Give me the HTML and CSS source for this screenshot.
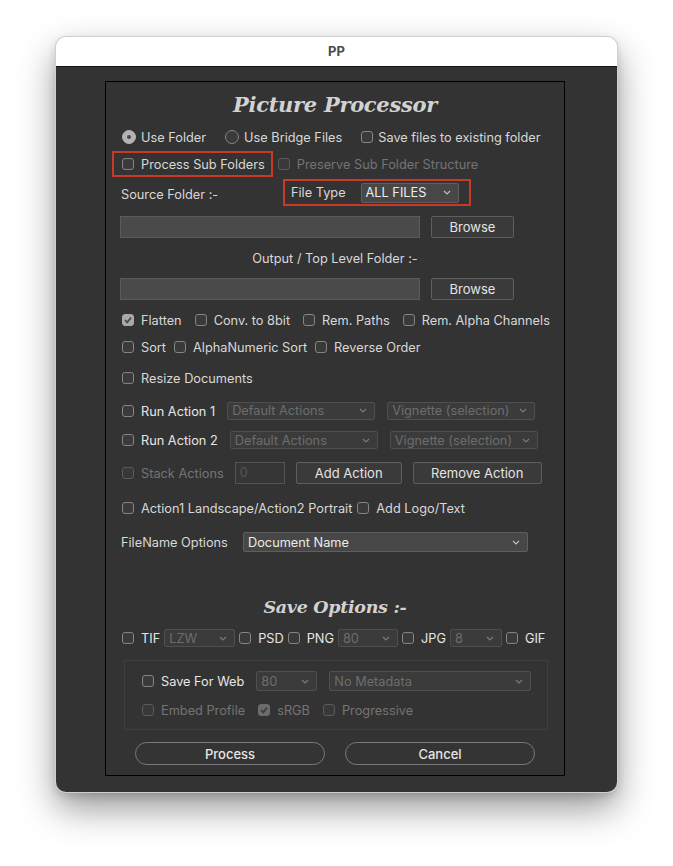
FILE: index.html
```html
<!DOCTYPE html>
<html lang="en">
<head>
    <meta charset="UTF-8">
    <title>PP</title>
    <link rel="stylesheet" href="styles.css">
</head>
<body>
<div class="window">
    <div class="titlebar">PP</div>
    <div class="dialog">
        <div class="panel">
            <h1 class="heading">Picture Processor</h1>

            <div class="row r-source cb-row gap19">
                <label class="opt"><span class="radio on"></span>Use Folder</label>
                <label class="opt"><span class="radio"></span>Use Bridge Files</label>
                <label class="opt"><span class="cb"></span>Save files to existing folder</label>
            </div>

            <div class="row r-sub cb-row">
                <label class="opt hilite hl-sub"><span class="cb"></span>Process Sub Folders</label>
                <label class="opt off"><span class="cb"></span>Preserve Sub Folder Structure</label>
            </div>

            <div class="row r-type">
                <span class="lbl src-lbl">Source Folder :-</span>
                <div class="hilite hl-type">
                    <span class="lbl">File Type</span>
                    <div class="select on w-type">ALL FILES<svg width="8" height="5" viewBox="0 0 8 5"><polyline points="1,1 4,4 7,1" fill="none" stroke="#bdbdbd" stroke-width="1.2"/></svg></div>
                </div>
            </div>

            <div class="row r-field">
                <div class="field"></div>
                <button class="btn browse">Browse</button>
            </div>

            <div class="row r-out">
                <span class="lbl">Output / Top Level Folder :-</span>
            </div>

            <div class="row r-field">
                <div class="field"></div>
                <button class="btn browse">Browse</button>
            </div>

            <div class="row r-flat cb-row gap13">
                <label class="opt"><span class="cb on"><svg width="10" height="10" viewBox="0 0 10 10"><polyline points="2,5.2 4.2,7.4 8,2.6" fill="none" stroke="#4a4a4a" stroke-width="1.8"/></svg></span>Flatten</label>
                <label class="opt"><span class="cb"></span>Conv. to 8bit</label>
                <label class="opt"><span class="cb"></span>Rem. Paths</label>
                <label class="opt"><span class="cb"></span>Rem. Alpha Channels</label>
            </div>

            <div class="row r-sort cb-row gap8">
                <label class="opt"><span class="cb"></span>Sort</label>
                <label class="opt"><span class="cb"></span>AlphaNumeric Sort</label>
                <label class="opt"><span class="cb"></span>Reverse Order</label>
            </div>

            <div class="row r-resize cb-row">
                <label class="opt"><span class="cb"></span>Resize Documents</label>
            </div>

            <div class="row r-act1 cb-row gap12">
                <label class="opt bright"><span class="cb"></span>Run Action 1</label>
                <div class="select w-act">Default Actions<svg width="8" height="5" viewBox="0 0 8 5"><polyline points="1,1 4,4 7,1" fill="none" stroke="#7a7a7a" stroke-width="1.2"/></svg></div>
                <div class="select w-act">Vignette (selection)<svg width="8" height="5" viewBox="0 0 8 5"><polyline points="1,1 4,4 7,1" fill="none" stroke="#7a7a7a" stroke-width="1.2"/></svg></div>
            </div>

            <div class="row r-act2 cb-row gap12">
                <label class="opt bright"><span class="cb"></span>Run Action 2</label>
                <div class="select w-act">Default Actions<svg width="8" height="5" viewBox="0 0 8 5"><polyline points="1,1 4,4 7,1" fill="none" stroke="#7a7a7a" stroke-width="1.2"/></svg></div>
                <div class="select w-act">Vignette (selection)<svg width="8" height="5" viewBox="0 0 8 5"><polyline points="1,1 4,4 7,1" fill="none" stroke="#7a7a7a" stroke-width="1.2"/></svg></div>
            </div>

            <div class="row r-stack cb-row gap11">
                <label class="opt off"><span class="cb"></span>Stack Actions</label>
                <div class="num">0</div>
                <button class="btn add">Add Action</button>
                <button class="btn remove">Remove Action</button>
            </div>

            <div class="row r-land cb-row gap5">
                <label class="opt"><span class="cb"></span>Action1 Landscape/Action2 Portrait</label>
                <label class="opt"><span class="cb"></span>Add Logo/Text</label>
            </div>

            <div class="row r-name">
                <span class="lbl name-lbl">FileName Options</span>
                <div class="select on w-name">Document Name<svg width="8" height="5" viewBox="0 0 8 5"><polyline points="1,1 4,4 7,1" fill="none" stroke="#bdbdbd" stroke-width="1.2"/></svg></div>
            </div>

            <h2 class="heading sub">Save Options :-</h2>

            <div class="row r-fmt cb-row gap4">
                <label class="opt bright"><span class="cb"></span>TIF</label>
                <div class="select w-tif">LZW<svg width="8" height="5" viewBox="0 0 8 5"><polyline points="1,1 4,4 7,1" fill="none" stroke="#7a7a7a" stroke-width="1.2"/></svg></div>
                <label class="opt bright"><span class="cb"></span>PSD</label>
                <label class="opt bright"><span class="cb"></span>PNG</label>
                <div class="select w-png">80<svg width="8" height="5" viewBox="0 0 8 5"><polyline points="1,1 4,4 7,1" fill="none" stroke="#7a7a7a" stroke-width="1.2"/></svg></div>
                <label class="opt bright"><span class="cb"></span>JPG</label>
                <div class="select w-jpg">8<svg width="8" height="5" viewBox="0 0 8 5"><polyline points="1,1 4,4 7,1" fill="none" stroke="#7a7a7a" stroke-width="1.2"/></svg></div>
                <label class="opt bright"><span class="cb"></span>GIF</label>
            </div>

            <div class="group">
                <div class="row r-web gap12">
                    <label class="opt bright"><span class="cb"></span>Save For Web</label>
                    <div class="select w-q">80<svg width="8" height="5" viewBox="0 0 8 5"><polyline points="1,1 4,4 7,1" fill="none" stroke="#7a7a7a" stroke-width="1.2"/></svg></div>
                    <div class="select w-meta">No Metadata<svg width="8" height="5" viewBox="0 0 8 5"><polyline points="1,1 4,4 7,1" fill="none" stroke="#7a7a7a" stroke-width="1.2"/></svg></div>
                </div>
                <div class="row r-embed gap13">
                    <label class="opt off"><span class="cb"></span>Embed Profile</label>
                    <label class="opt off"><span class="cb on dim"><svg width="10" height="10" viewBox="0 0 10 10"><polyline points="2,5.2 4.2,7.4 8,2.6" fill="none" stroke="#3e3e3e" stroke-width="1.8"/></svg></span>sRGB</label>
                    <label class="opt off"><span class="cb"></span>Progressive</label>
                </div>
            </div>

            <div class="row r-btns">
                <button class="pill">Process</button>
                <button class="pill">Cancel</button>
            </div>
        </div>
    </div>
</div>
</body>
</html>
```

FILE: styles.css
```css
* {
    margin: 0;
    padding: 0;
    box-sizing: border-box;
}

body {
    background: #ffffff;
    font-family: Inter, "Noto Sans", sans-serif;
    font-size: 12.75px;
    color: #d8d8d8;
    padding-bottom: 60px;
}

.window {
    width: 561px;
    margin: 37px 0 0 56px;
    border-radius: 10px;
    overflow: hidden;
    box-shadow: 0 0 0 1px #cfcfcf, 0 16px 36px rgba(0, 0, 0, 0.42), 0 4px 10px rgba(0, 0, 0, 0.15);
}

.titlebar {
    height: 30px;
    line-height: 29px;
    background: #ffffff;
    border-bottom: 1px solid #141414;
    text-align: center;
    font-weight: 700;
    font-size: 13px;
    color: #4a4a4a;
}

.dialog {
    background: #333333;
    padding: 14px 52px 16px 49px;
}

.panel {
    border: 1px solid #000000;
    padding: 6px 0 10px 14px;
}

.heading {
    height: 34px;
    line-height: 34px;
    text-align: center;
    margin-left: -14px;
    font-family: "DejaVu Serif", serif;
    font-style: italic;
    font-weight: 700;
    font-size: 21px;
    color: #d2d2d2;
    letter-spacing: -0.3px;
}

.heading.sub {
    height: 30px;
    line-height: 30px;
    margin-top: 34px;
    font-size: 17.5px;
}

.row {
    display: flex;
    align-items: center;
}

.cb-row {
    padding-left: 2px;
}

.gap4 { gap: 4px; }
.gap5 { gap: 5px; }
.gap8 { gap: 8px; }
.gap11 { gap: 11px; }
.gap12 { gap: 12px; }
.gap13 { gap: 13px; }
.gap19 { gap: 19px; }

.r-source { height: 30px; }
.r-sub { height: 24px; gap: 5px; }
.r-type { height: 36px; }
.r-field { height: 30px; gap: 11px; }
.r-out { height: 32px; justify-content: center; margin-left: -14px; }
.r-flat { height: 32px; }
.r-sort { height: 22px; }
.r-resize { height: 40px; }
.r-act1 { height: 26px; }
.r-act2 { height: 32px; }
.r-stack { height: 34px; }
.r-land { height: 36px; }
.r-name { height: 32px; }
.r-fmt { height: 32px; }
.r-web { height: 28px; }
.r-embed { height: 30px; }
.r-btns { height: 23px; margin-top: 12px; justify-content: center; gap: 20px; margin-left: -14px; }

.opt {
    display: flex;
    align-items: center;
    gap: 7px;
    white-space: nowrap;
}

.r-source .opt {
    gap: 5px;
}

.opt.bright {
    color: #e6e6e6;
}

.opt.off {
    color: #737373;
}

.lbl {
    white-space: nowrap;
}

.src-lbl {
    width: 163px;
    padding-left: 1px;
}

.name-lbl {
    padding-left: 1px;
    width: 123px;
}

/* checkboxes / radios */
.cb {
    width: 12px;
    height: 12px;
    border: 1px solid #858585;
    border-radius: 3px;
    background: #3a3a3a;
    display: flex;
    align-items: center;
    justify-content: center;
    flex-shrink: 0;
}

.cb.on {
    background: #a9a9a9;
    border-color: #a9a9a9;
}

.cb.on.dim {
    background: #6b6b6b;
    border-color: #6b6b6b;
}

.off .cb {
    border-color: #5a5a5a;
    background: #383838;
}

.radio {
    width: 14px;
    height: 14px;
    border: 1px solid #858585;
    border-radius: 50%;
    background: #3a3a3a;
    flex-shrink: 0;
    position: relative;
}

.radio.on {
    background: #b3b3b3;
    border-color: #b3b3b3;
}

.radio.on::after {
    content: "";
    position: absolute;
    left: 4px;
    top: 4px;
    width: 4px;
    height: 4px;
    border-radius: 50%;
    background: #4a4a4a;
}

/* the red marker boxes */
.hilite {
    border: 2px solid #c83a26;
}

.hl-sub {
    height: 26px;
    margin-left: -10px;
    padding: 0 6px 0 8px;
}

.hl-type {
    display: flex;
    align-items: center;
    height: 27px;
    padding: 0 10px 0 6px;
    gap: 15px;
    margin-top: -3px;
}

/* inputs */
.field {
    width: 300px;
    height: 22px;
    background: #4a4a4a;
    border: 1px solid #5b5b5b;
}

.btn {
    height: 22px;
    background: #3a3a3a;
    border: 1px solid #5e5e5e;
    border-radius: 2px;
    color: #e4e4e4;
    font-family: inherit;
    font-size: 13px;
}

.browse { width: 83px; }
.add { width: 106px; }
.remove { width: 129px; }

.num {
    width: 50px;
    height: 22px;
    background: #363636;
    border: 1px solid #545454;
    color: #555555;
    padding-left: 4px;
    line-height: 20px;
}

.select {
    display: flex;
    align-items: center;
    justify-content: space-between;
    height: 18px;
    padding: 0 7px 0 4px;
    background: #3b3b3b;
    border: 1px solid #4f4f4f;
    border-radius: 2px;
    color: #6d6d6d;
    white-space: nowrap;
}

.select.on {
    background: #474747;
    border-color: #5f5f5f;
    color: #ececec;
    height: 20px;
}

.w-type { width: 98px; }
.w-act { width: 148px; }
.w-name { width: 285px; }
.w-tif { width: 71px; }
.w-png { width: 60px; }
.w-jpg { width: 52px; }
.w-q { width: 61px; }
.w-meta { width: 202px; height: 20px; }
.w-q { height: 20px; }

.r-act1 .select { margin-top: -1px; }

.group {
    margin: 6px 16px 0 4px;
    border: 1px solid #3e3e3e;
    padding: 6px 0 4px 17px;
}

.pill {
    width: 190px;
    height: 23px;
    border: 1px solid #7a7a7a;
    border-radius: 12px;
    background: #343434;
    color: #e6e6e6;
    font-family: inherit;
    font-size: 13px;
    font-weight: 500;
}
```
